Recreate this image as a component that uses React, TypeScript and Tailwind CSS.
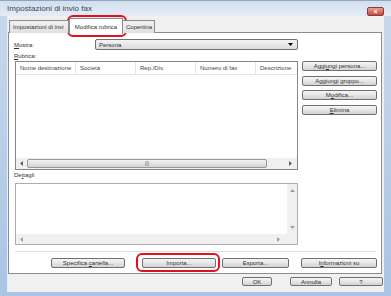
import React from "react";

const font = { fontFamily: '"Liberation Sans", Arial, sans-serif' };

function Btn({ label, w, h = 10, className = "" }: { label: React.ReactNode; w: string; h?: number; className?: string }) {
  return (
    <div
      className={`${w} ${h === 9 ? "h-[9px]" : "h-[10px]"} shrink-0 rounded-[2px] border border-[#707070] bg-gradient-to-b from-[#f6f6f6] via-[#e6e6e6] to-[#d2d2d2] flex items-center justify-center text-[6px] leading-none text-[#333] ${className}`}
    >
      {label}
    </div>
  );
}

const columns = ["Nome destinazione", "Società", "Rep./Div.", "Numero di fax", "Descrizione"];

export default function App() {
  return (
    <div
      className="relative w-[391px] h-[296px] overflow-hidden bg-gradient-to-b from-[#c9d9ec] to-[#a9c4e4] flex flex-col text-[#333]"
      style={font}
    >
      {/* Title bar */}
      <div className="relative h-[16px] shrink-0 border-t border-[#8ea6c4] bg-gradient-to-b from-[#d3dfee] to-[#e4ecf6] flex items-center pl-[7px]">
        <span className="text-[8px] leading-none text-[#3a4656] mt-[1px]">Impostazioni di invio fax</span>
        <div className="absolute right-[7px] top-[6px] w-[17px] h-[9px] rounded-[2px] border border-[#8a3a3a] bg-gradient-to-b from-[#e8a090] to-[#c24a3a] flex items-center justify-center text-white text-[7px] leading-none font-bold">
          ×
        </div>
      </div>

      {/* Client area */}
      <div className="mx-[7px] h-[276px] shrink-0 bg-[#f0f0f0] border-l border-[#e6eef8] flex flex-col">
        {/* Tabs */}
        <div className="relative h-[17px] flex items-end pl-[1px] z-10">
          <div className="w-[60px] h-[13px] border border-[#898c95] border-b-0 bg-gradient-to-b from-[#f2f2f2] to-[#e0e0e0] flex items-center pl-[3px] text-[6px] leading-none whitespace-nowrap overflow-hidden">
            Impostazioni di invi
          </div>
          <div className="w-[54px] h-[16px] border border-[#898c95] border-b-0 bg-white flex items-center justify-center text-[6px] leading-none -mb-[1px]">
            Modifica rubrica
          </div>
          <div className="w-[32px] h-[13px] border border-[#898c95] border-b-0 border-l-0 bg-gradient-to-b from-[#f2f2f2] to-[#e0e0e0] flex items-center pl-[3px] text-[6px] leading-none">
            Copertina
          </div>
        </div>

        {/* Panel */}
        <div className="-mt-[1px] w-[374px] h-[242px] border border-[#898c95] bg-white flex flex-col pl-[6px] pt-[6px]">
          <div className="flex items-center h-[11px]">
            <span className="w-[80px] -ml-[1px] text-[6px] leading-none">
              <u>M</u>ostra:
            </span>
            <div className="ml-[1px] w-[203px] h-[11px] rounded-[2px] border border-[#707070] bg-gradient-to-b from-[#f4f4f4] to-[#dcdcdc] flex items-center pl-[3px] pr-[4px] text-[6px] leading-none">
              <span className="flex-1">Persona</span>
              <svg width="5" height="3" viewBox="0 0 5 3">
                <path d="M0 0H5L2.5 3Z" fill="#000" />
              </svg>
            </div>
          </div>

          <div className="h-[11px] flex items-center -ml-[1px] text-[6px] leading-none">
            <u>R</u>ubrica:
          </div>

          <div className="flex">
            {/* List */}
            <div className="w-[283px] h-[109px] border border-[#828790] flex flex-col">
              <div className="h-[13px] flex border-b border-[#e5e5e5] bg-white">
                {columns.map((c, i) => (
                  <div
                    key={c}
                    className={`${i === 4 ? "flex-1" : "w-[60px] border-r border-[#e5e5e5]"} flex items-center pl-[4px] text-[6px] leading-none text-[#444] whitespace-nowrap overflow-hidden`}
                  >
                    {c}
                  </div>
                ))}
              </div>
              <div className="flex-1" />
              <div className="h-[11px] bg-[#f0f0f0] flex items-center">
                <div className="w-[11px] flex justify-center">
                  <svg width="3" height="5" viewBox="0 0 3 5">
                    <path d="M3 0V5L0 2.5Z" fill="#606060" />
                  </svg>
                </div>
                <div className="w-[240px] h-[9px] rounded-[2px] border border-[#979797] bg-gradient-to-b from-[#f3f3f3] to-[#d5d5d5] flex items-center justify-center text-[5px] leading-none text-[#555]">
                  |||
                </div>
                <div className="flex-1 flex justify-end pr-[5px]">
                  <svg width="3" height="5" viewBox="0 0 3 5">
                    <path d="M0 0V5L3 2.5Z" fill="#606060" />
                  </svg>
                </div>
              </div>
            </div>

            {/* Side buttons */}
            <div className="ml-[4px] flex flex-col gap-[4.5px]">
              <Btn w="w-[75px]" label={<span>Aggi<u>u</u>ngi persona...</span>} />
              <Btn w="w-[75px]" label={<span>Aggiun<u>g</u>i gruppo...</span>} />
              <Btn w="w-[75px]" label={<span>M<u>o</u>difica...</span>} />
              <Btn w="w-[75px]" label={<span><u>E</u>limina</span>} />
            </div>
          </div>

          <div className="h-[10px] flex items-center -ml-[1px] text-[6px] leading-none">
            De<u>t</u>tagli
          </div>

          {/* Details box */}
          <div className="mt-[3px] w-[283px] h-[62px] border border-[#abadb3] flex flex-col">
            <div className="flex-1 flex">
              <div className="flex-1" />
              <div className="w-[10px] bg-[#f0f0f0] flex flex-col items-center justify-between py-[5px]">
                <svg width="5" height="3" viewBox="0 0 5 3">
                  <path d="M0 3H5L2.5 0Z" fill="#a0a0a0" />
                </svg>
                <svg width="5" height="3" viewBox="0 0 5 3">
                  <path d="M0 0H5L2.5 3Z" fill="#a0a0a0" />
                </svg>
              </div>
            </div>
            <div className="h-[10px] flex">
              <div className="flex-1 bg-[#f0f0f0] flex items-center justify-between px-[4px] pr-[7px]">
                <svg width="3" height="5" viewBox="0 0 3 5">
                  <path d="M3 0V5L0 2.5Z" fill="#a0a0a0" />
                </svg>
                <svg width="3" height="5" viewBox="0 0 3 5">
                  <path d="M0 0V5L3 2.5Z" fill="#a0a0a0" />
                </svg>
              </div>
              <div className="w-[10px] bg-[#f0f0f0]" />
            </div>
          </div>

          <div className="mt-[6px] w-[361px] border-t border-[#d5dfe5]" />

          <div className="mt-[6px] flex">
            <Btn w="w-[74px] ml-[36px]" label={<span>Specifica <u>c</u>artella...</span>} />
            <div className="relative ml-[17px]">
              <Btn w="w-[74px]" label={<span>Importa...</span>} />
              <div className="absolute -left-[6px] -top-[5px] w-[84px] h-[19px] rounded-[6px] border-2 border-[#e3101e]" />
            </div>
            <Btn w="w-[67px] ml-[6px]" label={<span>Esporta...</span>} />
            <Btn w="w-[76px] ml-[12px]" label={<span>I<u>n</u>formazioni su</span>} />
          </div>
        </div>

        {/* Dialog buttons */}
        <div className="mt-[3px] flex">
          <Btn w="w-[30px] ml-[234px]" h={9} className="border-[#3c7fb1]" label="OK" />
          <Btn w="w-[42px] ml-[18px]" h={9} label="Annulla" />
          <Btn w="w-[44px] ml-[7px]" h={9} label="?" />
        </div>
      </div>

      {/* Red ring around selected tab */}
      <div className="absolute left-[67px] top-[15px] w-[60px] h-[22px] rounded-[6px] border-2 border-[#e3101e]" />
    </div>
  );
}
